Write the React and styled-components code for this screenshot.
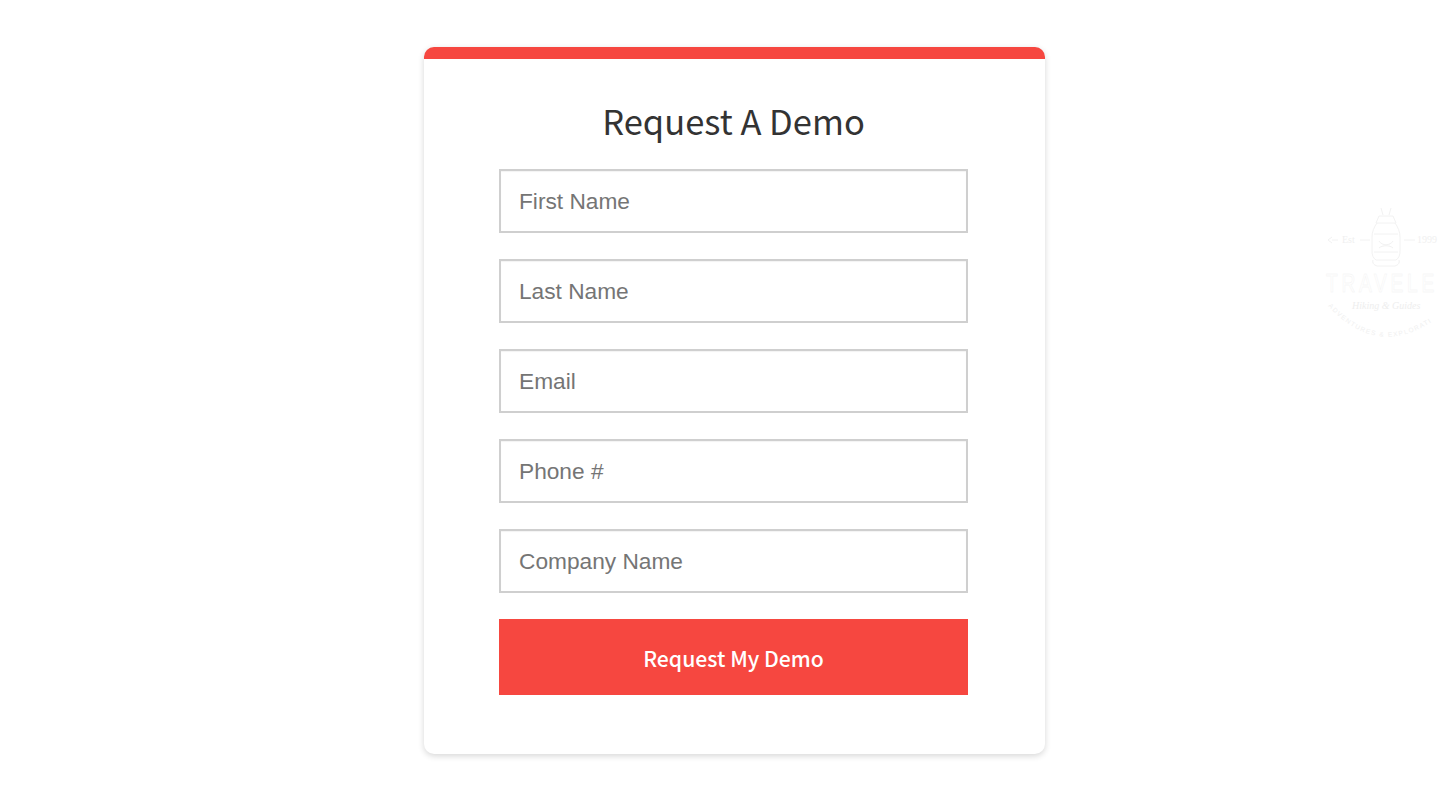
import React from "react";
import styled, { createGlobalStyle } from "styled-components";

const fields = ["First Name", "Last Name", "Email", "Phone #", "Company Name"];

const TravelerBadge = () => (
  <StBadge viewBox="0 0 120 145" aria-hidden="true">
    <g fill="none" stroke="#f2f2f2" strokeWidth="1">
      <path d="M61 8l2 7M71 8l-2 7M59 16h14l3 7H56z" />
      <path d="M57 23c-3 4-5 9-5 14v14c0 4 1 7 4 9h20c3-2 4-5 4-9V37c0-5-2-10-5-14" />
      <path d="M54 34h24M54 52h24M59 41c3 5 11 5 14 0M59 48c3-3 11-3 14 0" />
      <path d="M53 60c-1 3 1 5 4 6h18c3-1 5-3 4-6" />
      <path d="M40 40h10M84 40h11M8 40l4-3M8 40l4 3M12 40h6" />
    </g>
    <StBadgeSmall x="22" y="43">Est</StBadgeSmall>
    <StBadgeSmall x="97" y="43">1999</StBadgeSmall>
    <StBadgeName x="6" y="92" textLength="112" lengthAdjust="spacingAndGlyphs">TRAVELE</StBadgeName>
    <StBadgeScript x="32" y="109">Hiking &amp; Guides</StBadgeScript>
    <path id="badgeArc" d="M8 106 Q60 162 120 116" fill="none" />
    <StBadgeArc>
      <textPath href="#badgeArc">ADVENTURES &amp; EXPLORATI</textPath>
    </StBadgeArc>
  </StBadge>
);

const App = () => {
  return (
    <>
      <GlobalStyle />
      <StPage>
        <StCard>
          <StTitle>Request A Demo</StTitle>
          <StForm onSubmit={(e) => e.preventDefault()}>
            {fields.map((name) => (
              <StInput key={name} type="text" placeholder={name} />
            ))}
            <StSubmit type="submit">Request My Demo</StSubmit>
          </StForm>
        </StCard>
        <TravelerBadge />
      </StPage>
    </>
  );
};

export default App;

const GlobalStyle = createGlobalStyle`
  html, body {
    margin: 0;
    padding: 0;
    background-color: #fff;
    overflow: hidden;
  }
`;

const StPage = styled.div`
  position: relative;
  display: flex;
  justify-content: center;
  align-items: flex-start;
  width: 1440px;
  height: 800px;
  padding-top: 47px;
  padding-left: 29px;
  box-sizing: border-box;
  overflow: hidden;
`;

const StCard = styled.div`
  width: 621px;
  height: 707px;
  box-sizing: border-box;
  padding: 12px 77px 0 75px;
  background-color: #fff;
  border-radius: 10px;
  background-image: linear-gradient(#f64740, #f64740);
  background-repeat: no-repeat;
  background-size: 100% 12px;
  box-shadow: 0 2px 6px rgba(0, 0, 0, 0.16);
`;

const StTitle = styled.h1`
  margin: 35px 0 23px;
  font-family: "Noto Sans CJK SC", "Noto Sans", sans-serif;
  font-size: 34.5px;
  line-height: 52px;
  font-weight: 400;
  color: #333;
  text-align: center;
`;

const StForm = styled.form`
  display: flex;
  flex-direction: column;
  gap: 26px;
`;

const StInput = styled.input`
  display: block;
  width: 100%;
  height: 64px;
  box-sizing: border-box;
  padding: 0 18px;
  border: 2px solid #cfcfcf;
  border-radius: 0;
  outline: none;
  background-color: #fff;
  box-shadow: inset 0 1px 1px rgba(0, 0, 0, 0.05);
  font-family: "Liberation Sans", Arial, sans-serif;
  font-size: 22.7px;
  color: #757575;

  &::placeholder {
    color: #757575;
    opacity: 1;
  }
`;

const StSubmit = styled.button`
  display: block;
  width: 100%;
  height: 76px;
  padding: 1px 0 0;
  border: none;
  border-radius: 0;
  background-color: #f64740;
  font-family: "Noto Sans CJK SC", "Noto Sans", sans-serif;
  font-size: 21.2px;
  font-weight: 500;
  color: #fff;
  cursor: pointer;
`;

const StBadge = styled.svg`
  position: absolute;
  top: 200px;
  left: 1320px;
  width: 120px;
  height: 145px;
`;

const StBadgeSmall = styled.text`
  font-family: "Liberation Serif", serif;
  font-size: 10px;
  fill: #f0f0f0;
`;

const StBadgeName = styled.text`
  font-family: "Liberation Sans", sans-serif;
  font-size: 26px;
  letter-spacing: 5px;
  fill: none;
  stroke: #f2f2f2;
  stroke-width: 0.5px;
`;

const StBadgeScript = styled.text`
  font-family: "Liberation Serif", serif;
  font-size: 10px;
  font-style: italic;
  fill: #eeeeee;
`;

const StBadgeArc = styled.text`
  font-family: "Liberation Sans", sans-serif;
  font-size: 6.5px;
  letter-spacing: 1.3px;
  fill: #f0f0f0;
`;
